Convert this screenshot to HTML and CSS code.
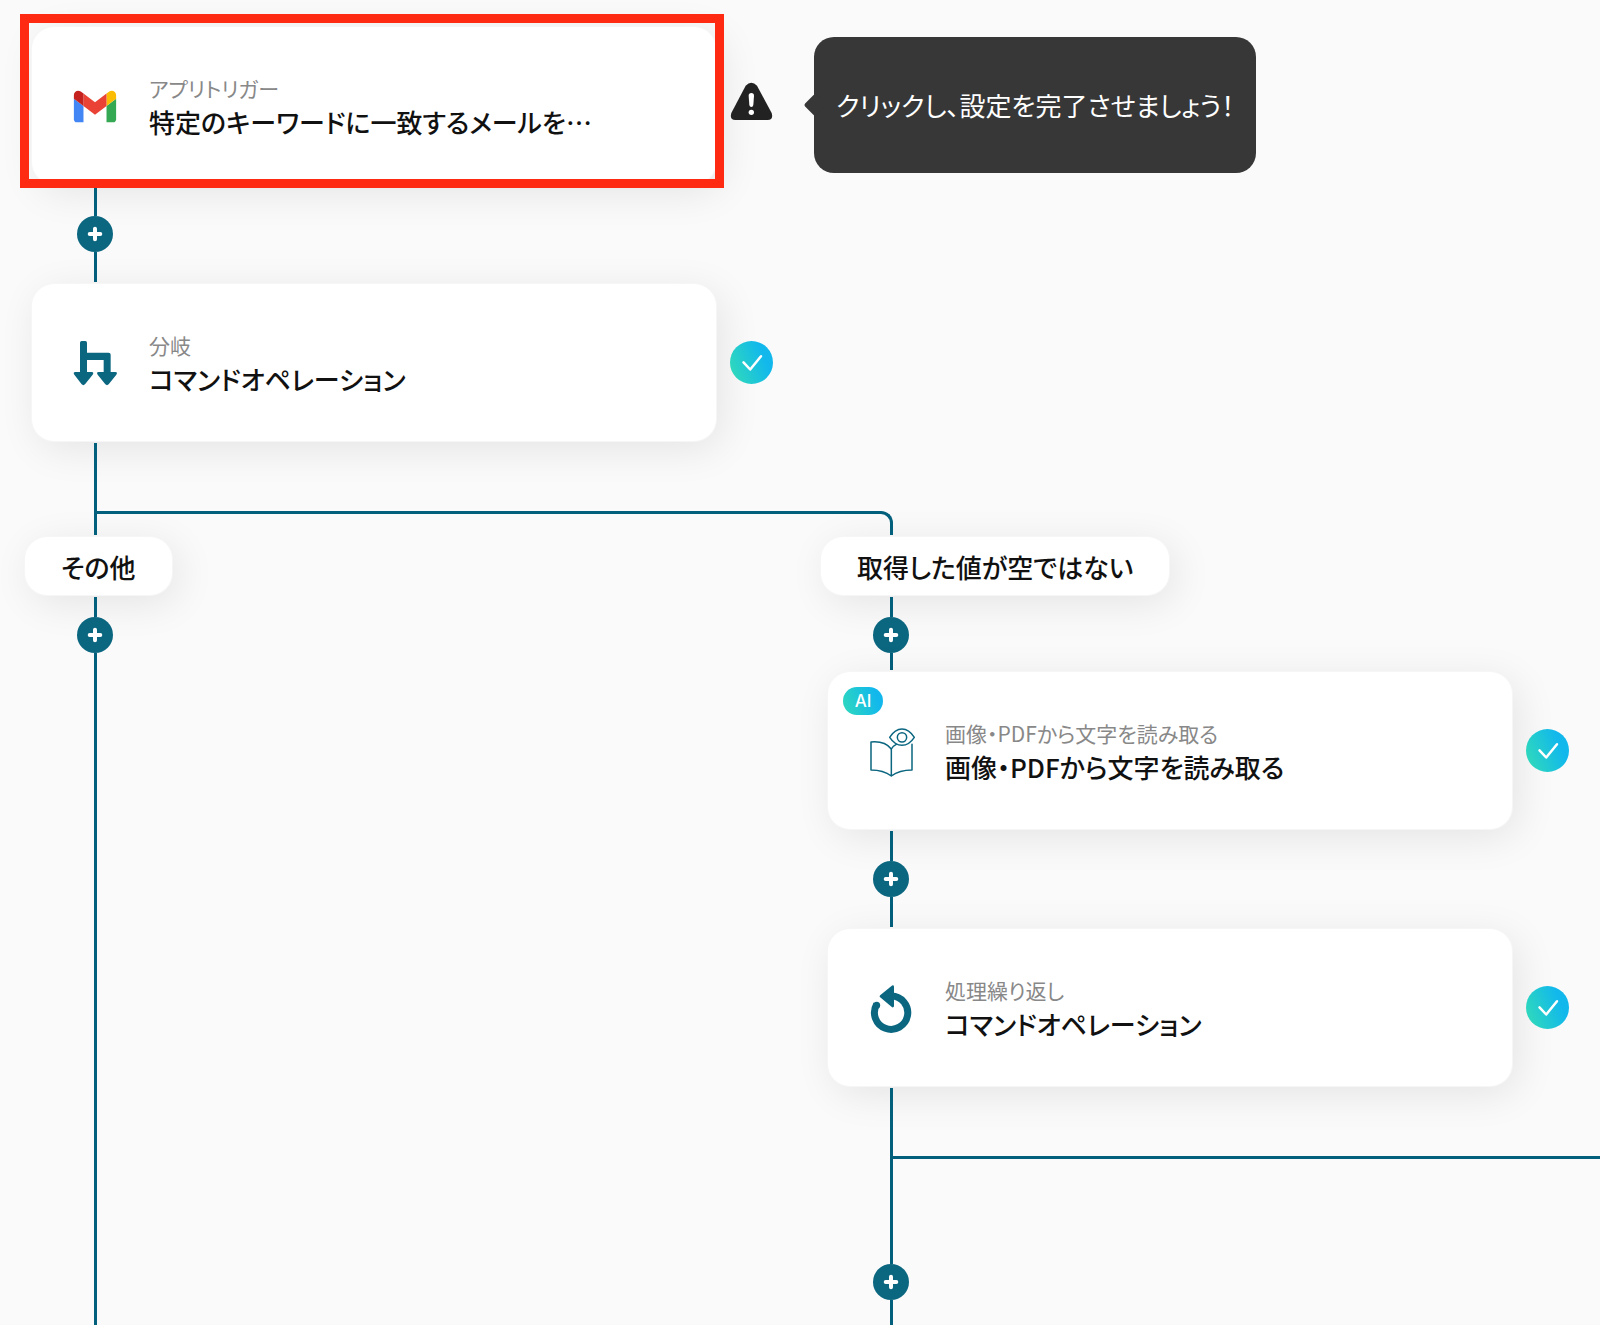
FILE: index.html
```html
<!DOCTYPE html>
<html lang="ja">
    <head>
        <meta charset="UTF-8">
        <meta name="viewport" content="width=device-width, initial-scale=1.0">
        <title>フロー</title>
        <link rel="stylesheet" href="styles.css">
    </head>
    <body>
        <!-- shared icons -->
        <svg class="sprite" aria-hidden="true">
            <defs>
                <linearGradient id="grad" x1="0" y1="0.7" x2="1" y2="0.3">
                    <stop offset="0" stop-color="#2fd9bb"/>
                    <stop offset="0.8" stop-color="#12b8ec"/>
                </linearGradient>
            </defs>
            <symbol id="plus" viewBox="0 0 36 36">
                <path d="M18 12.7v10.6M12.7 18h10.6" stroke="#fff" stroke-width="4" stroke-linecap="round"/>
            </symbol>
            <symbol id="check" viewBox="0 0 43 43">
                <circle cx="21.5" cy="21.5" r="21.5" fill="url(#grad)"/>
                <path d="M13.5 21.3l6.7 7.2L31 15.2" fill="none" stroke="#fff" stroke-width="2.5" stroke-linecap="round" stroke-linejoin="round"/>
            </symbol>
        </svg>

        <main class="flow">
            <section class="step">
                <article class="card selected">
                    <svg class="icon" viewBox="46 24 100 100" role="img" aria-label="Gmail">
                        <path fill="#4285f4" d="M58 108h14V74L52 59v43c0 3.32 2.69 6 6 6"/>
                        <path fill="#34a853" d="M120 108h14c3.32 0 6-2.69 6-6V59l-20 15"/>
                        <path fill="#fbbc04" d="M120 48v26l20-15v-8c0-7.42-8.47-11.65-14.4-7.2"/>
                        <path fill="#ea4335" d="M72 74V48l24 18 24-18v26L96 92"/>
                        <path fill="#c5221f" d="M52 51v8l20 15V48l-5.6-4.2c-5.94-4.45-14.4-.22-14.4 7.2"/>
                    </svg>
                    <div class="texts">
                        <p class="label">アプリトリガー</p>
                        <h2>特定のキーワードに一致するメールを…</h2>
                    </div>
                </article>
                <svg class="status" viewBox="990 252 129 129" role="img" aria-label="未設定">
                    <path fill="#222" d="M1037 257Q1054 240 1071 257L1115 339Q1121 360 1103 360H1006Q988 360 994 339Z"/>
                    <path fill="#fff" d="M1046 287Q1046 279 1054 279T1062 287L1060 315Q1059 321 1054 321T1048 315Z"/>
                    <circle cx="1054" cy="337" r="8" fill="#fff"/>
                </svg>
                <p class="tooltip">クリックし、設定を完了させましょう！</p>
            </section>

            <div class="line line-m start"></div>
            <button class="add" aria-label="追加"><svg><use href="#plus"/></svg></button>
            <div class="line line-m end"></div>

            <section class="step">
                <article class="card">
                    <svg class="icon" viewBox="213 207 144 144" aria-hidden="true">
                        <path fill="#0b6680" d="M240 218q0-5 5-5h11q5 0 5 5v30h65q6 0 6 6v52h14q8 1 3 8l-23 29q-5 5-10 0l-23-29q-5-7 3-8h15v-36h-50v36h14q8 1 3 8l-23 29q-5 5-10 0l-22-29q-5-7 3-8h14z"/>
                    </svg>
                    <div class="texts">
                        <p class="label">分岐</p>
                        <h2>コマンドオペレーション</h2>
                    </div>
                </article>
                <svg class="status" role="img" aria-label="設定済み"><use href="#check"/></svg>
            </section>

            <div class="line line-l start"></div>
            <div class="fork"></div>

            <div class="branches">
                <section class="branch">
                    <h3 class="condition">その他</h3>
                    <div class="line line-s start"></div>
                    <button class="add" aria-label="追加"><svg><use href="#plus"/></svg></button>
                    <div class="line rest"></div>
                </section>

                <section class="branch">
                    <h3 class="condition">取得した値が空ではない</h3>
                    <div class="line line-s start"></div>
                    <button class="add" aria-label="追加"><svg><use href="#plus"/></svg></button>
                    <div class="line line-xs end"></div>

                    <div class="step">
                        <article class="card">
                            <span class="ai">AI</span>
                            <svg class="icon" viewBox="202 619 144 144" aria-hidden="true">
                                <g fill="none" stroke="#0b6680" stroke-width="4.5" stroke-linecap="round" stroke-linejoin="round">
                                    <path d="M275 766Q251 748 214 748V664Q255 660 275 685V766Q299 748 337 748V671"/>
                                    <path d="M275 685Q280 675 290 671"/>
                                    <path d="M270 650Q286 625 307 625T344 650Q328 674 307 674T270 650Z"/>
                                    <circle cx="307" cy="650" r="14"/>
                                </g>
                            </svg>
                            <div class="texts">
                                <p class="label">画像・PDFから文字を読み取る</p>
                                <h2>画像・PDFから文字を読み取る</h2>
                            </div>
                        </article>
                        <svg class="status" role="img" aria-label="設定済み"><use href="#check"/></svg>
                    </div>

                    <div class="line line-m start"></div>
                    <button class="add" aria-label="追加"><svg><use href="#plus"/></svg></button>
                    <div class="line line-m end"></div>

                    <div class="step">
                        <article class="card">
                            <svg class="icon" viewBox="202 430 144 144" aria-hidden="true">
                                <path fill="none" stroke="#0b6680" stroke-width="21" d="M231 491A50 50 0 1 0 275 466"/>
                                <circle cx="231" cy="494" r="10.500" fill="#0b6680"/>
                                <path fill="#0b6680" stroke="#0b6680" stroke-width="8" stroke-linejoin="round" d="M279 438L244 467L279 496Z"/>
                            </svg>
                            <div class="texts">
                                <p class="label">処理繰り返し</p>
                                <h2>コマンドオペレーション</h2>
                            </div>
                        </article>
                        <svg class="status" role="img" aria-label="設定済み"><use href="#check"/></svg>
                    </div>

                    <div class="line line-l start"></div>
                    <div class="fork"></div>
                    <div class="line line-xl"></div>
                    <button class="add" aria-label="追加"><svg><use href="#plus"/></svg></button>
                    <div class="line rest"></div>
                </section>
            </div>
        </main>
    </body>
</html>
```
FILE: styles.css
```css
* {
    padding: 0;
    margin: 0;
    box-sizing: border-box;
}

body {
    background-color: #fafafa;
    color: #111;
    font-family: "Noto Sans CJK JP", sans-serif;
    font-feature-settings: "palt";
}

.sprite {
    position: absolute;
    width: 0;
    height: 0;
}

.flow {
    display: flex;
    flex-direction: column;
    min-height: 100vh;
    padding: 27px 0 0 25px;
    overflow: hidden;
}

/* cards */
.step {
    display: flex;
    align-items: center;
    margin-left: 7px;
}

.card {
    position: relative;
    display: flex;
    align-items: center;
    gap: 30px;
    flex: none;
    width: 684px;
    height: 157px;
    padding: 0 39px;
    border-radius: 22px;
    background-color: #fff;
    box-shadow: 0 0 0 1px #f6f6f6, 6px 8px 40px rgba(0, 0, 0, 0.09);
}

.card.selected::after {
    content: "";
    position: absolute;
    z-index: 1;
    top: -13px;
    right: -8px;
    bottom: -4px;
    left: -12px;
    border: 9px solid #ff2a12;
}

.icon {
    flex: none;
    width: 48px;
    height: 48px;
    overflow: visible;
}

.label {
    color: #888;
    font-size: 21px;
    font-weight: 400;
    line-height: 32px;
}

h2 {
    font-size: 26px;
    font-weight: 500;
    line-height: 36px;
    white-space: nowrap;
}

.status {
    position: relative;
    flex: none;
    width: 43px;
    height: 43px;
    margin-left: 14px;
    overflow: visible;
}

.ai {
    position: absolute;
    top: 15px;
    left: 15px;
    width: 40px;
    height: 28px;
    border-radius: 14px;
    background-image: linear-gradient(70deg, #2fd9bb, #12b8ec 80%);
    color: #fff;
    font-family: Inter, sans-serif;
    font-size: 17px;
    font-weight: 500;
    line-height: 28px;
    text-align: center;
}

.tooltip {
    position: relative;
    flex: none;
    height: 136px;
    margin: 0 0 2px 41px;
    padding: 0 22px;
    border-radius: 20px;
    background-color: #373737;
    color: #fff;
    font-size: 26px;
    font-weight: 400;
    line-height: 136px;
}

.tooltip::before {
    content: "";
    position: absolute;
    top: 60px;
    left: -7px;
    width: 16px;
    height: 16px;
    border-radius: 2px;
    background-color: #373737;
    transform: rotate(45deg);
}

/* connectors */
.line {
    position: relative;
    flex: none;
    width: 3px;
    margin-left: 69px;
    background-color: #03607d;
}

.line.start {
    margin-top: 2px;
}

.line.end {
    margin-bottom: 2px;
}

.line-xs {
    height: 17px;
}

.line-s {
    height: 20px;
}

.line-m {
    height: 30px;
}

.line-l {
    height: 68px;
}

.line-xl {
    height: 84px;
}

.line.rest {
    flex: 1;
}

.fork {
    position: relative;
    flex: none;
    width: 799px;
    height: 24px;
    margin-left: 69px;
    border: 3px solid #03607d;
    border-bottom: none;
    border-top-right-radius: 12px;
}

.add {
    position: relative;
    flex: none;
    width: 36px;
    height: 36px;
    margin-left: 52px;
    border: none;
    border-radius: 50%;
    background-color: #0b6680;
    cursor: pointer;
}

.add svg {
    display: block;
    width: 36px;
    height: 36px;
}

/* branches */
.branches {
    display: grid;
    grid-template-columns: 796px 1fr;
    flex: 1;
    margin-top: 2px;
}

.branch {
    display: flex;
    flex-direction: column;
    min-width: 0;
}

.condition {
    align-self: flex-start;
    height: 58px;
    padding: 0 36px;
    border-radius: 22px;
    background-color: #fff;
    box-shadow: 0 0 0 1px #f6f6f6, 6px 8px 40px rgba(0, 0, 0, 0.09);
    font-size: 26px;
    font-weight: 500;
    line-height: 60px;
}
```
